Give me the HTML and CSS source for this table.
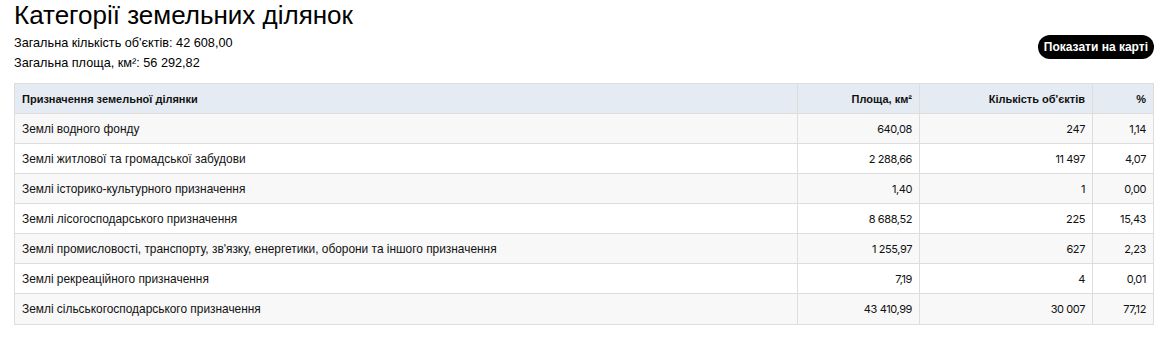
FILE: index.html
```html
<!DOCTYPE html>
<html lang="uk">
<head>
<meta charset="utf-8">
<title>Категорії земельних ділянок</title>
<link rel="stylesheet" href="styles.css">
</head>
<body>
<div class="page">
  <h1 class="title">Категорії земельних ділянок</h1>
  <div class="summary">
    <div class="meta">
      <div class="meta-line">Загальна кількість об'єктів: 42 608,00</div>
      <div class="meta-line">Загальна площа, км²: 56 292,82</div>
    </div>
    <button class="map-btn" type="button">Показати на карті</button>
  </div>
  <table class="grid">
    <thead>
      <tr>
        <th class="col-name">Призначення земельної ділянки</th>
        <th class="col-area num">Площа, км²</th>
        <th class="col-count num">Кількість об'єктів</th>
        <th class="col-pct num">%</th>
      </tr>
    </thead>
    <tbody>
      <tr><td>Землі водного фонду</td><td class="num">640,08</td><td class="num">247</td><td class="num">1,14</td></tr>
      <tr><td>Землі житлової та громадської забудови</td><td class="num">2 288,66</td><td class="num">11 497</td><td class="num">4,07</td></tr>
      <tr><td>Землі історико-культурного призначення</td><td class="num">1,40</td><td class="num">1</td><td class="num">0,00</td></tr>
      <tr><td>Землі лісогосподарського призначення</td><td class="num">8 688,52</td><td class="num">225</td><td class="num">15,43</td></tr>
      <tr><td>Землі промисловості, транспорту, зв'язку, енергетики, оборони та іншого призначення</td><td class="num">1 255,97</td><td class="num">627</td><td class="num">2,23</td></tr>
      <tr><td>Землі рекреаційного призначення</td><td class="num">7,19</td><td class="num">4</td><td class="num">0,01</td></tr>
      <tr><td>Землі сільськогосподарського призначення</td><td class="num">43 410,99</td><td class="num">30 007</td><td class="num">77,12</td></tr>
    </tbody>
  </table>
</div>
</body>
</html>
```
FILE: styles.css
```css
html, body {
  margin: 0;
  padding: 0;
  background: #ffffff;
}
body {
  font-family: "Liberation Sans", Arial, sans-serif;
  color: #111111;
}
.page {
  padding: 0 21px 0 14px;
}
.title {
  margin: 0;
  font-size: 26px;
  line-height: 31px;
  font-weight: 400;
  color: #000000;
}
.summary {
  display: flex;
  justify-content: space-between;
  align-items: flex-start;
  margin-top: 2px;
}
.meta-line {
  font-size: 12.7px;
  line-height: 20px;
  color: #000000;
}
.map-btn {
  margin-top: 2px;
  background: #000000;
  color: #ffffff;
  border: none;
  border-radius: 12px;
  height: 24px;
  padding: 0 6px;
  font-family: "Liberation Sans", Arial, sans-serif;
  font-size: 12px;
  font-weight: 700;
}
.grid {
  margin-top: 10px;
  width: 100%;
  border-collapse: collapse;
  font-size: 11.9px;
}
.grid th, .grid td {
  border: 1px solid #dddddd;
  height: 29px;
  padding: 0 7px;
  text-align: left;
}
.grid tbody tr:last-child td {
  height: 30px;
}
.grid th {
  background: #e5ebf2;
  font-weight: 700;
  font-size: 11px;
}
.grid tbody tr:nth-child(odd) td {
  background: #f8f8f8;
}
.grid .num {
  text-align: right;
}
.grid td.num {
  font-family: Inter, "Liberation Sans", sans-serif;
  font-size: 11px;
  letter-spacing: -0.4px;
}
.col-area { width: 107px; }
.col-count { width: 158px; }
.col-pct { width: 46px; }
```
